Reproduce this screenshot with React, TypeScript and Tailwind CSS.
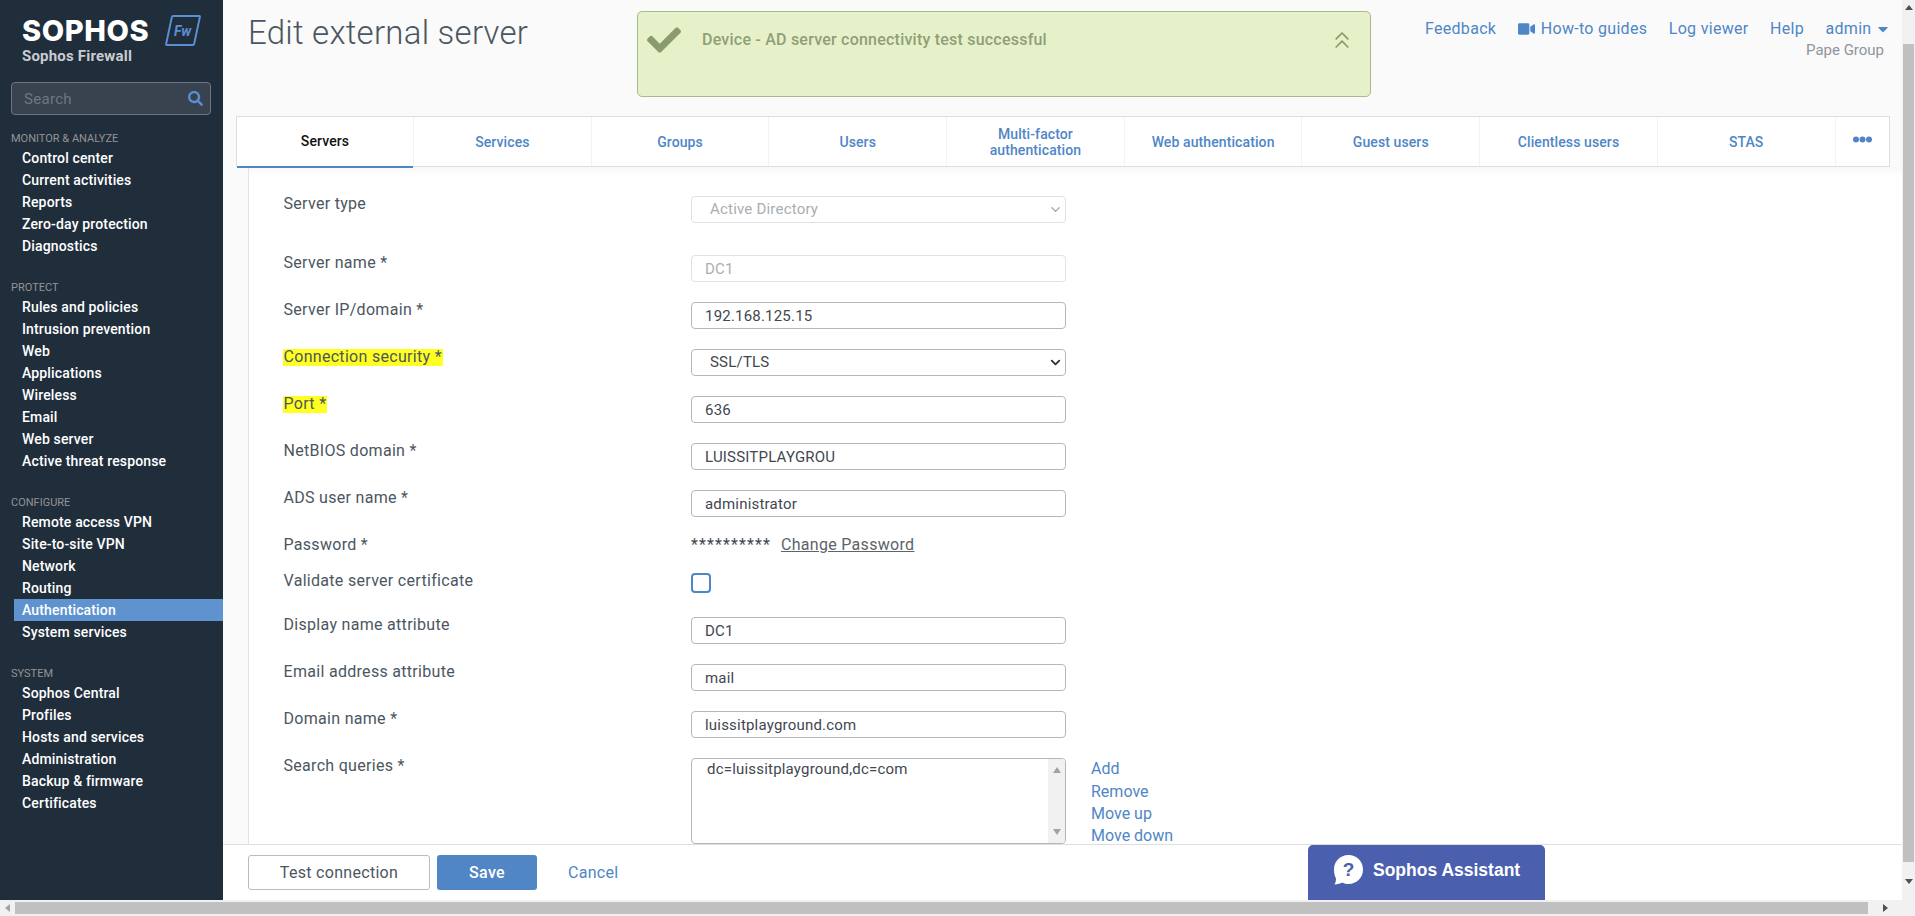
import React from "react";
import { FaSearch, FaVideo, FaCaretDown, FaCheck } from "react-icons/fa";
import { ChevronsUp, ChevronDown } from "lucide-react";

const nav = [
  { title: "MONITOR & ANALYZE", items: ["Control center", "Current activities", "Reports", "Zero-day protection", "Diagnostics"] },
  { title: "PROTECT", items: ["Rules and policies", "Intrusion prevention", "Web", "Applications", "Wireless", "Email", "Web server", "Active threat response"] },
  { title: "CONFIGURE", items: ["Remote access VPN", "Site-to-site VPN", "Network", "Routing", "Authentication", "System services"] },
  { title: "SYSTEM", items: ["Sophos Central", "Profiles", "Hosts and services", "Administration", "Backup & firmware", "Certificates"] },
];

const tabs = ["Services", "Groups", "Users", "Multi-factor authentication", "Web authentication", "Guest users", "Clientless users", "STAS"];

function Sidebar() {
  return (
    <aside className="w-[223px] shrink-0 bg-[#202e3c] flex flex-col">
      <div className="pl-[22px] pt-[15px] h-[82px]">
        <div className="flex items-start h-[31px]">
          <span className="font-['Inter',sans-serif] font-extrabold text-[29px] leading-[32px] text-white tracking-[0.6px] w-[139px]">SOPHOS</span>
          <div className="ml-[7px] w-[30px] h-[31px] border-2 border-[#5a8fd3] rounded-[2px] -skew-x-12 flex items-center justify-center">
            <span className="text-[14px] italic font-bold text-[#5a8fd3] leading-none skew-x-12">Fw</span>
          </div>
        </div>
        <div className="text-[15px] font-bold text-[#c9cdd1] leading-[20px] tracking-[0.2px]">Sophos Firewall</div>
      </div>
      <div className="mx-[11px] h-[33px] w-[200px] rounded-[4px] border border-[#6d7680] bg-[#38434f] flex items-center pl-[12px] pr-[7px]">
        <span className="flex-1 text-[15px] text-[#6d7680] tracking-[0.3px] pt-[1px]">Search</span>
        <FaSearch className="text-[#5a8fd3] w-[15px] h-[15px]" />
      </div>
      <nav className="mt-[16px]">
        {nav.map((s) => (
          <div key={s.title} className="mb-[23px]">
            <div className="pl-[11px] h-[16px] text-[11px] leading-[16px] text-[#939393]">{s.title}</div>
            {s.items.map((i) => (
              <div
                key={i}
                className={`ml-[14px] pl-[8px] h-[22px] leading-[22px] text-[14px] font-medium tracking-[0.15px] text-white ${i === "Authentication" ? "bg-[#5f93cf]" : ""}`}
              >
                {i}
              </div>
            ))}
          </div>
        ))}
      </nav>
    </aside>
  );
}

function Header() {
  return (
    <header className="h-[116px] shrink-0 flex bg-[#fafafa]">
      <div className="w-[414px] shrink-0 pl-[25px] pt-[12px]">
        <h1 className="text-[33px] leading-[42px] font-light text-[#4c5661] tracking-[0.25px]">Edit external server</h1>
      </div>
      <div className="w-[734px] h-[86px] mt-[11px] shrink-0 rounded-[5px] border border-[#a8b98b] bg-[#e6f1c9] flex items-start pl-[9px] pr-[14px] pt-[11px]">
        <FaCheck className="text-[#8a9c6e] w-[34px] h-[34px]" />
        <span className="ml-[21px] text-[16px] font-medium text-[#8f9f78] leading-[34px] tracking-[0.22px]">Device - AD server connectivity test successful</span>
        <ChevronsUp className="ml-auto text-[#8a9c6e] w-[28px] h-[28px] mt-[3px]" strokeWidth={1.5} />
      </div>
      <div className="flex-1 pl-[54px] pt-[18px] text-[16px] text-[#4f86c6] leading-[22px]">
        <div className="flex gap-[21.5px] whitespace-nowrap tracking-[0.3px]">
          <span>Feedback</span>
          <span className="flex items-center gap-[6px]"><FaVideo className="w-[17px] h-[16px]" />How-to guides</span>
          <span>Log viewer</span>
          <span>Help</span>
          <span className="flex items-center gap-[5px]">admin<FaCaretDown className="w-[12px] h-[16px]" /></span>
        </div>
        <div className="pl-[381px] text-[15px] text-[#8f949a] whitespace-nowrap leading-[21px]">Pape Group</div>
      </div>
    </header>
  );
}

function Tabs() {
  return (
    <div className="bg-[#fafafa] pl-[13px] pr-[12px] shrink-0 relative z-10">
      <div className="h-[51px] flex border border-[#dedede] bg-white text-[14px] font-medium text-[#4f86c6] tracking-[0.1px]">
        <div className="w-[176px] shrink-0 flex items-center justify-center text-[#111] border-b-2 border-[#4f86c6] -mb-px h-[51px]">Servers</div>
        {tabs.map((t) => (
          <div key={t} className="w-[177.7px] shrink-0 border-l border-[#f3f3f3] flex items-center justify-center text-center leading-[16px] px-[20px]">
            {t}
          </div>
        ))}
        <div className="flex-1 border-l border-[#f3f3f3] flex items-start justify-center pt-[19px]">
          <svg width="19" height="7" viewBox="0 0 19 7" fill="#4f86c6">
            <circle cx="3" cy="3.5" r="3" /><circle cx="9.5" cy="3.5" r="3" /><circle cx="16" cy="3.5" r="3" />
          </svg>
        </div>
      </div>
    </div>
  );
}

const inputCls = "block w-[375px] h-[27px] rounded-[4px] border border-[#b4b7ba] bg-white px-[13px] text-[15px] text-[#3f4750] outline-none tracking-[0.2px]";
const disabledCls = "block w-[375px] h-[27px] rounded-[4px] border border-[#dfe1e3] bg-white px-[13px] text-[15px] text-[#a9aeb3] outline-none tracking-[0.2px]";

function Row({ label, mark, mb = "mb-[20px]", children }: { label: string; mark?: boolean; mb?: string; children: React.ReactNode }) {
  return (
    <div className={`flex items-start ${mb}`}>
      <div className="w-[407.5px] shrink-0 text-[16px] leading-[15px] text-[#4c5661] tracking-[0.3px]">
        <span className={mark ? "inline-block h-[17px] bg-[#ffff22] leading-[15px] -ml-[1px] pl-[1px] pr-[1px]" : ""}>{label}</span>
      </div>
      {children}
    </div>
  );
}

function SelectBox({ value, disabled }: { value: string; disabled?: boolean }) {
  return (
    <div className="relative w-[375px]">
      <select
        disabled={disabled}
        defaultValue={value}
        className={`${disabled ? disabledCls : inputCls} appearance-none pl-[18px]`}
      >
        <option>{value}</option>
      </select>
      <ChevronDown
        className={`absolute right-[3px] top-[6px] w-[15px] h-[15px] ${disabled ? "text-[#9aa0a6]" : "text-[#333]"}`}
        strokeWidth={disabled ? 2 : 3}
      />
    </div>
  );
}

function Input({ value, disabled }: { value: string; disabled?: boolean }) {
  return <input readOnly disabled={disabled} value={value} className={disabled ? disabledCls : inputCls} />;
}

function Form() {
  return (
    <div className="flex-1 min-h-0 overflow-hidden bg-[#fafafa] pl-[25px] relative">
      <div className="h-full bg-white border-l border-[#e2e2e2] pl-[34.5px] pt-[29px] shadow-[inset_0_12px_12px_-10px_rgba(0,0,0,0.05)]">
        <Row label="Server type" mb="mb-[32px]"><SelectBox value="Active Directory" disabled /></Row>
        <Row label="Server name *"><Input value="DC1" disabled /></Row>
        <Row label="Server IP/domain *"><Input value="192.168.125.15" /></Row>
        <Row label="Connection security *" mark><SelectBox value="SSL/TLS" /></Row>
        <Row label="Port *" mark><Input value="636" /></Row>
        <Row label="NetBIOS domain *"><Input value="LUISSITPLAYGROU" /></Row>
        <Row label="ADS user name *"><Input value="administrator" /></Row>
        <Row label="Password *">
          <div className="flex items-center h-[16px] text-[16px] text-[#3f4750]">
            <span className="w-[90px] tracking-[1.1px]">**********</span>
            <span className="underline text-[#5c6369] tracking-[0.3px]">Change Password</span>
          </div>
        </Row>
        <Row label="Validate server certificate" mb="mb-[24px]">
          <div className="w-[20px] h-[20px] rounded-[4px] border-2 border-[#4f86c6] bg-white" />
        </Row>
        <Row label="Display name attribute"><Input value="DC1" /></Row>
        <Row label="Email address attribute"><Input value="mail" /></Row>
        <Row label="Domain name *"><Input value="luissitplayground.com" /></Row>
        <Row label="Search queries *" mb="mb-0">
          <div className="w-[375px] h-[86px] shrink-0 rounded-[4px] border border-[#b4b7ba] bg-white flex overflow-hidden">
            <div className="flex-1 pl-[15px] text-[15px] leading-[20px] text-[#3f4750] tracking-[0.2px]">dc=luissitplayground,dc=com</div>
            <div className="w-[17px] bg-[#f1f1f1] flex flex-col items-center justify-between py-[8px] text-[#a3a3a3]">
              <svg width="8" height="6" viewBox="0 0 8 6" fill="currentColor"><path d="M4 0l4 6H0z" /></svg>
              <svg width="8" height="6" viewBox="0 0 8 6" fill="currentColor"><path d="M4 6L0 0h8z" /></svg>
            </div>
          </div>
          <div className="ml-[25px] text-[16px] leading-[22.6px] text-[#4f86c6] whitespace-nowrap">
            <div>Add</div>
            <div>Remove</div>
            <div>Move up</div>
            <div className="h-[18px] leading-[18px] mt-[1px]">Move down</div>
          </div>
        </Row>
      </div>
    </div>
  );
}

function Footer() {
  return (
    <footer className="h-[56px] shrink-0 border-t border-[#dedede] bg-white flex">
      <div className="flex items-start pl-[25px] pt-[10px] gap-[7px] text-[16px] tracking-[0.3px]">
        <button className="w-[182px] h-[35px] rounded-[3px] border border-[#b9bcbf] bg-white text-[#4c5661]">Test connection</button>
        <button className="w-[100px] h-[35px] rounded-[3px] bg-[#5085c6] text-white font-medium">Save</button>
        <span className="ml-[24px] leading-[35px] text-[#4f86c6]">Cancel</span>
      </div>
      <div className="ml-auto mr-[357px] w-[237px] h-[55px] bg-[#4a5fae] rounded-t-[5px] flex items-center pl-[25px] pb-[5px] text-white">
        <svg width="31" height="32" viewBox="0 0 31 32" className="shrink-0">
          <path d="M15.5 1C24 1 30 7.5 30 15.5S24 30 15.5 30c-2.5 0-4-.5-6-1.5-2 1-5 1.6-8 2 1.2-2 1.6-4 1.4-6.2C1.500 21.500 1 18.500 1 15.500 1 7.500 7 1 15.500 1z" fill="#fff" />
          <text x="15.500" y="22" textAnchor="middle" fontSize="19" fontWeight="700" fill="#4a5fae" fontFamily="Liberation Sans, sans-serif">?</text>
        </svg>
        <span className="ml-[9px] font-['Liberation_Sans',sans-serif] font-bold text-[17.5px] whitespace-nowrap">Sophos Assistant</span>
      </div>
    </footer>
  );
}

function VScrollbar() {
  return (
    <div className="w-[13px] shrink-0 bg-[#f1f1f1] flex flex-col items-center">
      <div className="h-[14px] flex items-center justify-center pt-[1px] text-[#505050]">
        <svg width="8" height="5" viewBox="0 0 8 5" fill="currentColor"><path d="M4 0l4 5H0z" /></svg>
      </div>
      <div className="mt-[30px] h-[818px] w-[11px] bg-[#c0c0c0]" />
      <div className="flex-1 flex items-center justify-center text-[#505050]">
        <svg width="8" height="5" viewBox="0 0 8 5" fill="currentColor"><path d="M4 5L0 0h8z" /></svg>
      </div>
    </div>
  );
}

function HScrollbar() {
  return (
    <div className="h-[16px] shrink-0 bg-[#f1f1f1] flex items-center">
      <div className="w-[15px] flex items-center justify-center text-[#a3a3a3]">
        <svg width="5" height="8" viewBox="0 0 5 8" fill="currentColor"><path d="M0 4l5-4v8z" /></svg>
      </div>
      <div className="w-[1853px] h-[12px] bg-[#c0c0c0]" />
      <div className="w-[34px] flex items-center justify-center text-[#505050]">
        <svg width="5" height="8" viewBox="0 0 5 8" fill="currentColor"><path d="M5 4L0 8V0z" /></svg>
      </div>
    </div>
  );
}

export default function App() {
  return (
    <div className="w-[1915px] h-[916px] overflow-hidden flex flex-col bg-white font-['Roboto',sans-serif]">
      <div className="flex-1 min-h-0 flex">
        <Sidebar />
        <main className="flex-1 min-w-0 flex flex-col">
          <Header />
          <Tabs />
          <Form />
          <Footer />
        </main>
        <VScrollbar />
      </div>
      <HScrollbar />
    </div>
  );
}
